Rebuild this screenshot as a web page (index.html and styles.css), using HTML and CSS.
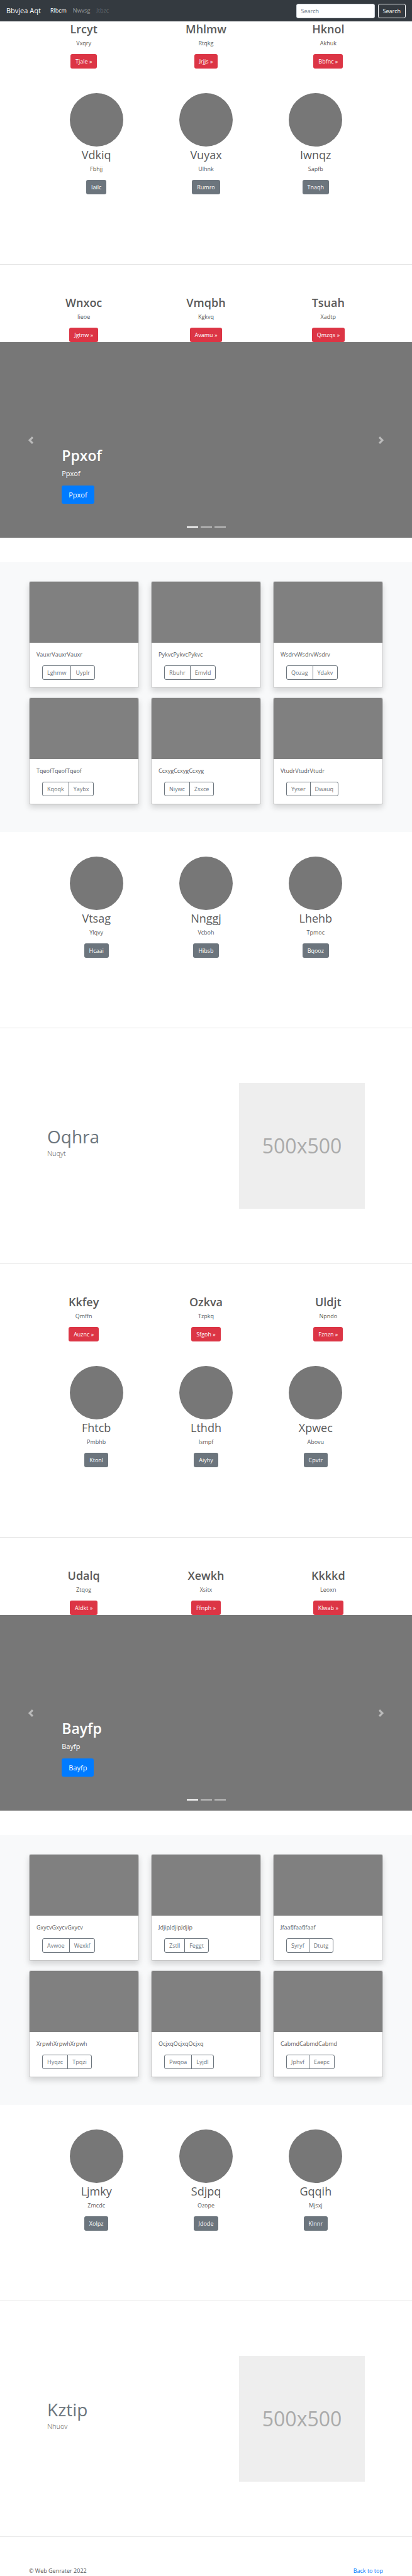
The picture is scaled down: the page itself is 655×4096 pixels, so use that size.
FILE: index.html
```html
<!DOCTYPE html>
<html lang="en">
<head>
<meta charset="utf-8">
<meta name="viewport" content="width=device-width, initial-scale=1">
<title>Bbvjea Aqt</title>
<link rel="stylesheet" href="styles.css">
</head>
<body id="top">
<header class="navbar">
  <a class="brand" href="#top">Bbvjea Aqt</a>
  <nav class="nav">
    <a class="nav-link active" href="#top">Rlbcm</a>
    <a class="nav-link" href="#top">Nwvsg</a>
    <a class="nav-link disabled" aria-disabled="true">Jtbzc</a>
  </nav>
  <form class="search">
    <input class="search-input" type="search" placeholder="Search" aria-label="Search">
    <button class="btn btn-outline-light" type="button">Search</button>
  </form>
</header>
<main>
  <section class="columns">
    <div class="column"><h2 class="heading strong">Lrcyt</h2><p class="text">Vxqry</p><a class="btn btn-danger" href="#top">Tjale »</a></div>
    <div class="column"><h2 class="heading strong">Mhlmw</h2><p class="text">Rtqkg</p><a class="btn btn-danger" href="#top">Jrjjs »</a></div>
    <div class="column"><h2 class="heading strong">Hknol</h2><p class="text">Akhuk</p><a class="btn btn-danger" href="#top">Bbfnc »</a></div>
  </section>
  <section class="columns profiles">
    <div class="column"><div class="avatar"></div><h2 class="heading">Vdkiq</h2><p class="text">Fbhjj</p><a class="btn btn-secondary" href="#top">Iailc</a></div>
    <div class="column"><div class="avatar"></div><h2 class="heading">Vuyax</h2><p class="text">Ulhnk</p><a class="btn btn-secondary" href="#top">Rumro</a></div>
    <div class="column"><div class="avatar"></div><h2 class="heading">Iwnqz</h2><p class="text">Sapfb</p><a class="btn btn-secondary" href="#top">Tnaqh</a></div>
  </section>
  <hr class="divider">
  <section class="columns spaced">
    <div class="column"><h2 class="heading strong">Wnxoc</h2><p class="text">Iieoe</p><a class="btn btn-danger" href="#top">Jgtnw »</a></div>
    <div class="column"><h2 class="heading strong">Vmqbh</h2><p class="text">Kgkvq</p><a class="btn btn-danger" href="#top">Avamu »</a></div>
    <div class="column"><h2 class="heading strong">Tsuah</h2><p class="text">Xadtp</p><a class="btn btn-danger" href="#top">Qmzqs »</a></div>
  </section>
  <section class="carousel">
    <div class="caption"><h1 class="caption-title">Ppxof</h1><p class="caption-text">Ppxof</p><a class="btn btn-primary" href="#top">Ppxof</a></div>
    <button class="arrow prev" type="button" aria-label="Previous"><svg class="chevron" viewBox="0 0 8 8"><path d="M5.25 0l-4 4 4 4 1.5-1.5L4.25 4l2.5-2.5L5.25 0z"/></svg></button>
    <button class="arrow next" type="button" aria-label="Next"><svg class="chevron" viewBox="0 0 8 8"><path d="M2.75 0l-1.5 1.5L3.75 4l-2.5 2.5L2.75 8l4-4-4-4z"/></svg></button>
    <div class="indicators"><span class="dash current"></span><span class="dash"></span><span class="dash"></span></div>
  </section>
  <section class="album">
    <article class="card"><div class="card-image"></div><div class="card-body"><p class="text">VauxrVauxrVauxr</p><div class="btn-group"><button class="btn btn-outline" type="button">Lghmw</button><button class="btn btn-outline" type="button">Uyplr</button></div></div></article>
    <article class="card"><div class="card-image"></div><div class="card-body"><p class="text">PykvcPykvcPykvc</p><div class="btn-group"><button class="btn btn-outline" type="button">Rbuhr</button><button class="btn btn-outline" type="button">Emvld</button></div></div></article>
    <article class="card"><div class="card-image"></div><div class="card-body"><p class="text">WsdrvWsdrvWsdrv</p><div class="btn-group"><button class="btn btn-outline" type="button">Qozag</button><button class="btn btn-outline" type="button">Ydakv</button></div></div></article>
    <article class="card"><div class="card-image"></div><div class="card-body"><p class="text">TqeofTqeofTqeof</p><div class="btn-group"><button class="btn btn-outline" type="button">Kqoqk</button><button class="btn btn-outline" type="button">Yaybx</button></div></div></article>
    <article class="card"><div class="card-image"></div><div class="card-body"><p class="text">CcxygCcxygCcxyg</p><div class="btn-group"><button class="btn btn-outline" type="button">Niywc</button><button class="btn btn-outline" type="button">Zsxce</button></div></div></article>
    <article class="card"><div class="card-image"></div><div class="card-body"><p class="text">VtudrVtudrVtudr</p><div class="btn-group"><button class="btn btn-outline" type="button">Yyser</button><button class="btn btn-outline" type="button">Dwauq</button></div></div></article>
  </section>
  <section class="columns profiles">
    <div class="column"><div class="avatar"></div><h2 class="heading">Vtsag</h2><p class="text">Ylqvy</p><a class="btn btn-secondary" href="#top">Hcaai</a></div>
    <div class="column"><div class="avatar"></div><h2 class="heading">Nnggj</h2><p class="text">Vcboh</p><a class="btn btn-secondary" href="#top">Hibsb</a></div>
    <div class="column"><div class="avatar"></div><h2 class="heading">Lhehb</h2><p class="text">Tpmoc</p><a class="btn btn-secondary" href="#top">Bqooz</a></div>
  </section>
  <hr class="divider">
  <section class="feature">
    <div class="feature-copy"><h2 class="feature-title">Oqhra</h2><p class="lead">Nuqyt</p></div>
    <div class="placeholder">500x500</div>
  </section>
  <hr class="divider">
  <section class="columns spaced">
    <div class="column"><h2 class="heading strong">Kkfey</h2><p class="text">Qmffn</p><a class="btn btn-danger" href="#top">Auznc »</a></div>
    <div class="column"><h2 class="heading strong">Ozkva</h2><p class="text">Tzpkq</p><a class="btn btn-danger" href="#top">Sfgoh »</a></div>
    <div class="column"><h2 class="heading strong">Uldjt</h2><p class="text">Npndo</p><a class="btn btn-danger" href="#top">Fznzn »</a></div>
  </section>
  <section class="columns profiles">
    <div class="column"><div class="avatar"></div><h2 class="heading">Fhtcb</h2><p class="text">Pmbhb</p><a class="btn btn-secondary" href="#top">Ktonl</a></div>
    <div class="column"><div class="avatar"></div><h2 class="heading">Lthdh</h2><p class="text">Ismpf</p><a class="btn btn-secondary" href="#top">Aiyhy</a></div>
    <div class="column"><div class="avatar"></div><h2 class="heading">Xpwec</h2><p class="text">Abovu</p><a class="btn btn-secondary" href="#top">Cpvtr</a></div>
  </section>
  <hr class="divider">
  <section class="columns spaced">
    <div class="column"><h2 class="heading strong">Udalq</h2><p class="text">Ztqog</p><a class="btn btn-danger" href="#top">Aldkt »</a></div>
    <div class="column"><h2 class="heading strong">Xewkh</h2><p class="text">Xsitx</p><a class="btn btn-danger" href="#top">Ffnph »</a></div>
    <div class="column"><h2 class="heading strong">Kkkkd</h2><p class="text">Leoxn</p><a class="btn btn-danger" href="#top">Klwab »</a></div>
  </section>
  <section class="carousel">
    <div class="caption"><h1 class="caption-title">Bayfp</h1><p class="caption-text">Bayfp</p><a class="btn btn-primary" href="#top">Bayfp</a></div>
    <button class="arrow prev" type="button" aria-label="Previous"><svg class="chevron" viewBox="0 0 8 8"><path d="M5.25 0l-4 4 4 4 1.5-1.5L4.25 4l2.5-2.5L5.25 0z"/></svg></button>
    <button class="arrow next" type="button" aria-label="Next"><svg class="chevron" viewBox="0 0 8 8"><path d="M2.75 0l-1.5 1.5L3.75 4l-2.5 2.5L2.75 8l4-4-4-4z"/></svg></button>
    <div class="indicators"><span class="dash current"></span><span class="dash"></span><span class="dash"></span></div>
  </section>
  <section class="album">
    <article class="card"><div class="card-image"></div><div class="card-body"><p class="text">GxycvGxycvGxycv</p><div class="btn-group"><button class="btn btn-outline" type="button">Avwoe</button><button class="btn btn-outline" type="button">Wexkf</button></div></div></article>
    <article class="card"><div class="card-image"></div><div class="card-body"><p class="text">JdjipJdjipJdjip</p><div class="btn-group"><button class="btn btn-outline" type="button">Zstll</button><button class="btn btn-outline" type="button">Feggt</button></div></div></article>
    <article class="card"><div class="card-image"></div><div class="card-body"><p class="text">JfaafJfaafJfaaf</p><div class="btn-group"><button class="btn btn-outline" type="button">Syryf</button><button class="btn btn-outline" type="button">Dtutg</button></div></div></article>
    <article class="card"><div class="card-image"></div><div class="card-body"><p class="text">XrpwhXrpwhXrpwh</p><div class="btn-group"><button class="btn btn-outline" type="button">Hyqzc</button><button class="btn btn-outline" type="button">Tpqzi</button></div></div></article>
    <article class="card"><div class="card-image"></div><div class="card-body"><p class="text">OcjxqOcjxqOcjxq</p><div class="btn-group"><button class="btn btn-outline" type="button">Pwqoa</button><button class="btn btn-outline" type="button">Lyjdl</button></div></div></article>
    <article class="card"><div class="card-image"></div><div class="card-body"><p class="text">CabmdCabmdCabmd</p><div class="btn-group"><button class="btn btn-outline" type="button">Jphvf</button><button class="btn btn-outline" type="button">Eaepc</button></div></div></article>
  </section>
  <section class="columns profiles">
    <div class="column"><div class="avatar"></div><h2 class="heading">Ljmky</h2><p class="text">Zmcdc</p><a class="btn btn-secondary" href="#top">Xolpz</a></div>
    <div class="column"><div class="avatar"></div><h2 class="heading">Sdjpq</h2><p class="text">Ozope</p><a class="btn btn-secondary" href="#top">Jdode</a></div>
    <div class="column"><div class="avatar"></div><h2 class="heading">Gqqih</h2><p class="text">Mjsxj</p><a class="btn btn-secondary" href="#top">Klnnr</a></div>
  </section>
  <hr class="divider">
  <section class="feature">
    <div class="feature-copy"><h2 class="feature-title">Kztip</h2><p class="lead">Nhuov</p></div>
    <div class="placeholder">500x500</div>
  </section>
  <hr class="divider">
</main>
<footer class="footer">
  <span>© Web Genrater 2022</span>
  <a class="footer-link" href="#top">Back to top</a>
</footer>
</body>
</html>
```

FILE: styles.css
```css
* {
  box-sizing: border-box;
}

body {
  margin: 0;
  background: #fff;
  color: #5a5a5a;
  font-family: "Open Sans", "Noto Sans", sans-serif;
  font-size: 9px;
  line-height: 14px;
}

h1,
h2,
p {
  margin: 0;
}

a {
  text-decoration: none;
}

/* Top bar */
.navbar {
  display: flex;
  align-items: center;
  height: 34px;
  padding: 0 10px;
  background: #343a40;
}

.brand {
  margin-right: 10px;
  color: #fff;
  font-size: 11px;
  line-height: 18px;
}

.nav {
  display: flex;
  flex: 1;
}

.nav-link {
  padding: 5px;
  color: rgba(255, 255, 255, 0.5);
}

.nav-link.active {
  color: #fff;
}

.nav-link.disabled {
  color: rgba(255, 255, 255, 0.25);
}

.search {
  display: flex;
  gap: 5px;
}

.search-input {
  width: 125px;
  height: 23px;
  padding: 0 7px;
  border: 1px solid #ced4da;
  border-radius: 3px;
  background: #fff;
  color: #495057;
  font: inherit;
}

.search-input::placeholder {
  color: #6c757d;
}

/* Buttons */
.btn {
  display: inline-block;
  padding: 4px 7px;
  border: 1px solid transparent;
  border-radius: 3px;
  font-family: inherit;
  font-size: 9px;
  line-height: 13px;
  text-align: center;
}

.btn-outline-light {
  border-color: #f8f9fa;
  background: transparent;
  color: #f8f9fa;
}

.btn-danger {
  background: #dc3545;
  color: #fff;
}

.btn-secondary {
  background: #6c757d;
  color: #fff;
}

.btn-primary {
  padding: 5px 10px;
  background: #007bff;
  color: #fff;
  font-size: 11px;
  line-height: 17px;
}

.btn-outline {
  border-color: #6c757d;
  background: transparent;
  color: #6c757d;
}

.btn-group {
  display: flex;
  margin-left: 9px;
}

.btn-group .btn:first-child {
  border-radius: 3px 0 0 3px;
}

.btn-group .btn:last-child {
  margin-left: -1px;
  border-radius: 0 3px 3px 0;
}

/* Three-column rows */
.columns {
  display: grid;
  grid-template-columns: repeat(3, 1fr);
  padding: 0 36px;
}

.column {
  display: flex;
  flex-direction: column;
  align-items: center;
}

.heading {
  margin-bottom: 3px;
  font-size: 18px;
  font-weight: 400;
  line-height: 25px;
}

.heading.strong {
  font-weight: 600;
}

.text {
  margin-bottom: 10px;
}

.spaced {
  margin-top: 48px;
}

.profiles {
  margin: 39px 0 111px;
  padding: 0 66px;
}

.avatar {
  width: 85px;
  height: 85px;
  margin-bottom: 1px;
  border-radius: 50%;
  background: #777;
}

.divider {
  height: 1px;
  margin: 0;
  border: 0;
  background: #e6e6e6;
}

/* Carousel */
.carousel {
  position: relative;
  display: flex;
  align-items: flex-end;
  height: 311px;
  padding: 0 15% 54px;
  background: #777;
  color: #fff;
}

.caption-title {
  margin-bottom: 5px;
  font-size: 23px;
  font-weight: 600;
  line-height: 29px;
}

.caption-text {
  margin-bottom: 10px;
  font-size: 11px;
  line-height: 18px;
}

.arrow {
  position: absolute;
  top: 0;
  bottom: 0;
  display: flex;
  align-items: center;
  justify-content: center;
  width: 15%;
  padding: 0;
  border: 0;
  background: transparent;
  opacity: 0.5;
}

.prev {
  left: 0;
}

.next {
  right: 0;
}

.chevron {
  width: 12px;
  height: 12px;
  fill: #fff;
}

.indicators {
  position: absolute;
  right: 0;
  bottom: 16px;
  left: 0;
  display: flex;
  justify-content: center;
  gap: 4px;
}

.dash {
  width: 18px;
  height: 2px;
  background: #fff;
  opacity: 0.5;
}

.dash.current {
  opacity: 1;
}

/* Card album */
.album {
  display: grid;
  grid-template-columns: repeat(3, 1fr);
  gap: 15px 19px;
  margin-top: 39px;
  padding: 30px 46px 44px;
  background: #f8f9fa;
}

.card {
  border: 1px solid rgba(0, 0, 0, 0.125);
  border-radius: 3px;
  background: #fff;
  background-clip: padding-box;
  box-shadow: 0 5px 10px rgba(0, 0, 0, 0.15);
}

.card-image {
  height: 97px;
  border-radius: 2px 2px 0 0;
  background: #808080;
}

.card-body {
  padding: 12px 11px;
}

/* Feature row */
.feature {
  display: flex;
  align-items: center;
  justify-content: space-between;
  padding: 87px 75px;
}

.feature-title {
  color: #6c757d;
  font-size: 28px;
  font-weight: 400;
  line-height: 36px;
}

.lead {
  margin-bottom: 12px;
  font-size: 11px;
  font-weight: 300;
  line-height: 18px;
}

.placeholder {
  display: flex;
  align-items: center;
  justify-content: center;
  width: 200px;
  height: 200px;
  background: #eee;
  color: #aaa;
  font-size: 32px;
  line-height: 44px;
}

.footer {
  display: flex;
  justify-content: space-between;
  padding: 47px 46px 1px;
}

.footer-link {
  color: #007bff;
}
```
